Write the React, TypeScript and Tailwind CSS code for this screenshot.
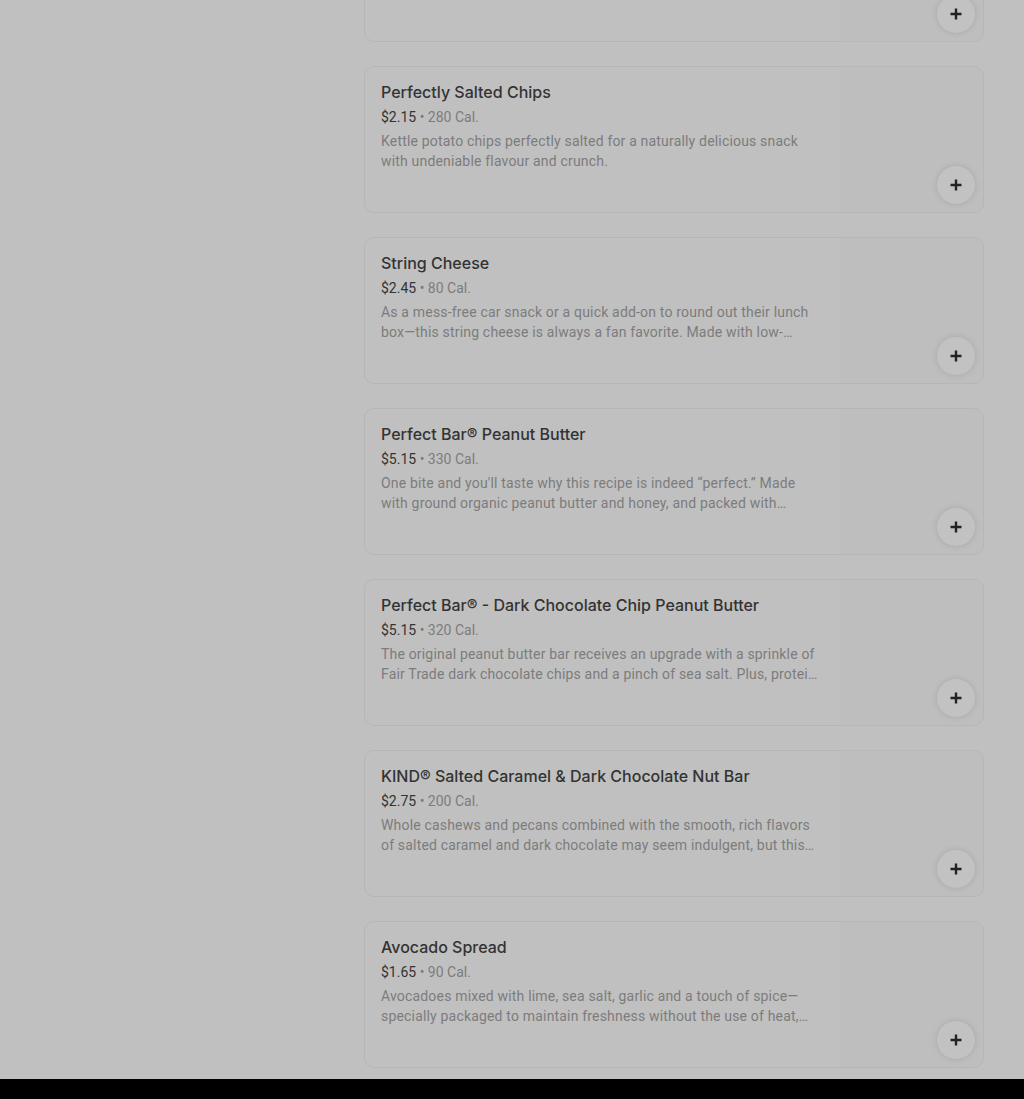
import React from "react";

type Item = { name: string; price: string; cal: string; desc: string };

const items: Item[] = [
  {
    name: "Smartfood White Cheddar Popcorn",
    price: "$2.15",
    cal: "160 Cal.",
    desc: "Popped to perfection and covered in delicious white cheddar cheese, a light and airy snack for any time of day, packed with flavour.",
  },
  {
    name: "Perfectly Salted Chips",
    price: "$2.15",
    cal: "280 Cal.",
    desc: "Kettle potato chips perfectly salted for a naturally delicious snack with undeniable flavour and crunch.",
  },
  {
    name: "String Cheese",
    price: "$2.45",
    cal: "80 Cal.",
    desc: "As a mess-free car snack or a quick add-on to round out their lunch box—this string cheese is always a fan favorite. Made with low-moisture part-skim mozzarella.",
  },
  {
    name: "Perfect Bar® Peanut Butter",
    price: "$5.15",
    cal: "330 Cal.",
    desc: "One bite and you'll taste why this recipe is indeed \u201Cperfect.\u201D Made with ground organic peanut butter and honey, and packed with protein from whole food ingredients.",
  },
  {
    name: "Perfect Bar® - Dark Chocolate Chip Peanut Butter",
    price: "$5.15",
    cal: "320 Cal.",
    desc: "The original peanut butter bar receives an upgrade with a sprinkle of Fair Trade dark chocolate chips and a pinch of sea salt. Plus, protein from whole food ingredients.",
  },
  {
    name: "KIND® Salted Caramel & Dark Chocolate Nut Bar",
    price: "$2.75",
    cal: "200 Cal.",
    desc: "Whole cashews and pecans combined with the smooth, rich flavors of salted caramel and dark chocolate may seem indulgent, but this bar has just 5g of sugar.",
  },
  {
    name: "Avocado Spread",
    price: "$1.65",
    cal: "90 Cal.",
    desc: "Avocadoes mixed with lime, sea salt, garlic and a touch of spice—specially packaged to maintain freshness without the use of heat, preservatives or additives.",
  },
];

function Card({ item }: { item: Item }) {
  return (
    <div className="relative flex h-[147px] shrink-0 overflow-hidden rounded-[10px] border border-[#b6b6b6] bg-[#c0c0c0]">
      <div className="flex w-[479px] flex-col px-4 pt-[15px]">
        <div className="text-[16px] font-medium leading-5 text-[#333333]">{item.name}</div>
        <div className="mt-[5px] text-[14px] leading-5 [font-family:Roboto,sans-serif]">
          <span className="text-[#333333]">{item.price}</span>
          <span className="text-[#7c7c7c]"> • {item.cal}</span>
        </div>
        <div className="mt-[4px] line-clamp-2 text-[14px] leading-5 tracking-[0.18px] text-[#7c7c7c] [font-family:Roboto,sans-serif]">
          {item.desc}
        </div>
      </div>
      <div className="flex-1" />
      <div className="w-[144px] bg-[#bebebe]" />
      <button className="absolute bottom-[8px] right-[8px] flex h-[38px] w-[38px] items-center justify-center rounded-full bg-[#c2c2c2] shadow-[0_0_6px_rgba(0,0,0,0.12)]">
        <svg width="14" height="14" viewBox="0 0 14 14">
          <path d="M7 1.5v11M1.5 7h11" stroke="#222" strokeWidth="2.4" />
        </svg>
      </button>
    </div>
  );
}

export default function App() {
  return (
    <div className="flex h-[1099px] w-[1024px] flex-col bg-black" style={{ fontFamily: "Inter, 'Noto Sans', sans-serif" }}>
      <div className="flex h-[1079px] overflow-hidden bg-[#c0c0c0]">
        <div className="w-[364px] shrink-0" />
        <div className="-mt-[105px] flex w-[620px] flex-col gap-[24px]">
          {items.map((it) => (
            <Card key={it.name} item={it} />
          ))}
        </div>
      </div>
    </div>
  );
}
